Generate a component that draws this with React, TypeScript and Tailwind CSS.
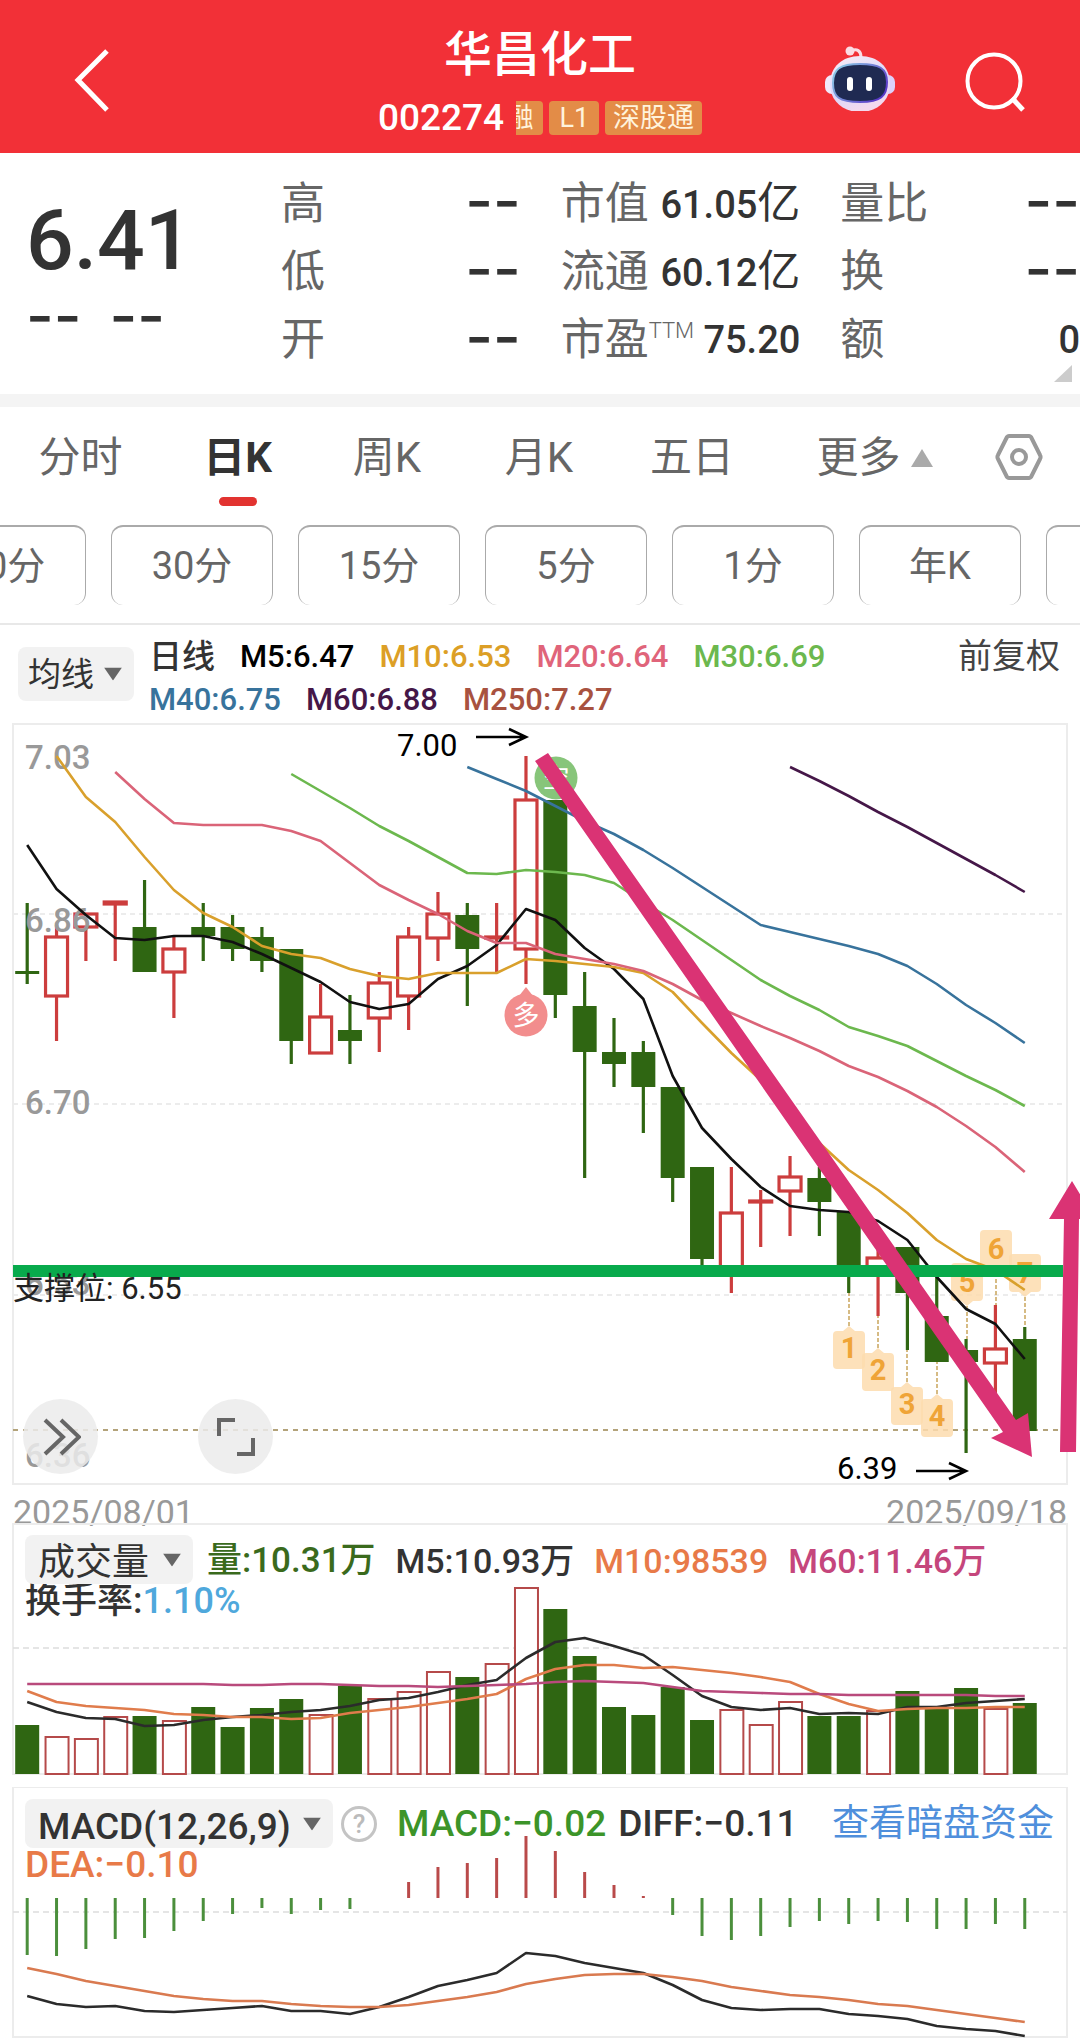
import { clsx } from "clsx";

const FONT = "font-[Roboto,'Noto_Sans_CJK_SC',sans-serif]";

const GREEN = "#2f6612";
const RED = "#cc3d3d";
const STEP = 29.34;
const BODY = 24;

const cx = (i: number) => 27.2 + i * STEP;

// direction, high, body top, body bottom, low
type Candle = ["up" | "down", number, number, number, number];

const candles: Candle[] = [
  ["down", 903, 971, 974, 984],
  ["up", 925, 937, 996, 1041],
  ["up", 914, 914, 927, 961],
  ["up", 903, 902, 904, 961],
  ["down", 880, 927, 972, 972],
  ["up", 937, 949, 972, 1018],
  ["down", 903, 927, 936, 961],
  ["down", 915, 927, 949, 961],
  ["down", 927, 937, 961, 972],
  ["down", 949, 949, 1041, 1064],
  ["up", 984, 1017, 1053, 1053],
  ["down", 995, 1030, 1041, 1064],
  ["up", 972, 983, 1018, 1052],
  ["up", 927, 937, 996, 1030],
  ["up", 892, 914, 938, 961],
  ["down", 903, 915, 949, 1006],
  ["up", 903, 937, 938, 972],
  ["up", 756, 800, 949, 984],
  ["down", 800, 800, 995, 1018],
  ["down", 972, 1006, 1052, 1178],
  ["down", 1018, 1052, 1064, 1087],
  ["down", 1041, 1052, 1087, 1133],
  ["down", 1087, 1087, 1178, 1202],
  ["down", 1167, 1167, 1259, 1270],
  ["up", 1167, 1213, 1270, 1293],
  ["up", 1190, 1201, 1202, 1247],
  ["up", 1156, 1177, 1191, 1236],
  ["down", 1167, 1178, 1202, 1236],
  ["down", 1212, 1212, 1270, 1293],
  ["up", 1250, 1258, 1270, 1316],
  ["down", 1247, 1247, 1293, 1350],
  ["down", 1270, 1316, 1362, 1362],
  ["down", 1339, 1350, 1362, 1453],
  ["up", 1305, 1349, 1363, 1396],
  ["down", 1327, 1339, 1431, 1431],
];

const averages = [
  {
    color: "#111111",
    start: 0,
    ys: [845, 889, 915, 938, 940, 936, 936, 942, 954, 968, 982, 1002, 1009, 1004, 979, 966, 945, 909, 920, 948, 969, 999, 1076, 1128, 1159, 1187, 1206, 1210, 1212, 1221, 1240, 1277, 1309, 1324, 1359],
  },
  {
    color: "#d9a02c",
    start: 1,
    ys: [756, 797, 822, 857, 890, 913, 927, 946, 954, 958, 969, 976, 979, 973, 973, 973, 959, 961, 964, 967, 973, 992, 1023, 1053, 1080, 1110, 1143, 1170, 1190, 1213, 1240, 1259, 1270, 1290],
  },
  {
    color: "#da6478",
    start: 3,
    ys: [772, 799, 823, 825, 825, 825, 831, 841, 863, 885, 900, 914, 931, 943, 943, 954, 959, 964, 971, 984, 1000, 1013, 1026, 1038, 1051, 1066, 1077, 1091, 1107, 1126, 1147, 1172],
  },
  {
    color: "#6cb84e",
    start: 9,
    ys: [774, 791, 808, 826, 841, 857, 873, 874, 870, 872, 875, 883, 902, 920, 940, 960, 980, 996, 1010, 1027, 1036, 1046, 1061, 1076, 1090, 1106],
  },
  {
    color: "#38739c",
    start: 15,
    ys: [767, 779, 791, 806, 821, 834, 850, 868, 887, 906, 925, 932, 939, 946, 954, 966, 984, 1005, 1023, 1043],
  },
  { color: "#451748", start: 26, ys: [767, 781, 796, 812, 827, 843, 859, 875, 892] },
];

// x, tip y, end of the leader line, side of the candle
const signals = [
  { n: 1, x: 849, tip: 1326, to: 1293 },
  { n: 2, x: 878, tip: 1348, to: 1316 },
  { n: 3, x: 907, tip: 1382, to: 1350 },
  { n: 4, x: 937, tip: 1394, to: 1362 },
  { n: 5, x: 967, tip: 1306, to: 1339, above: true },
  { n: 6, x: 996, tip: 1273, to: 1305, above: true },
  { n: 7, x: 1025, tip: 1297, to: 1327, above: true },
];

const volumes = [205, 217, 219, 197, 196, 201, 187, 207, 188, 179, 195, 166, 179, 172, 152, 157, 144, 68, 89, 136, 187, 195, 167, 200, 190, 205, 182, 196, 196, 191, 171, 189, 168, 189, 183];
const volumeUp = [1, 2, 3, 5, 10, 12, 13, 14, 16, 17, 24, 25, 26, 29, 33];
const volumeLines = [
  { color: "#2b2b2b", ys: [182, 192, 198, 199, 206, 205, 200, 197, 195, 192, 190, 186, 180, 178, 172, 165, 160, 138, 122, 118, 126, 135, 155, 176, 187, 190, 188, 194, 193, 194, 187, 187, 183, 181, 179] },
  { color: "#e07c4c", ys: [171, 182, 186, 188, 190, 194, 195, 197, 197, 199, 198, 193, 190, 187, 183, 179, 174, 159, 149, 145, 145, 148, 147, 150, 153, 157, 162, 174, 184, 191, 189, 188, 188, 187, 187] },
  { color: "#b94a7c", ys: [164, 164, 164, 164, 164, 164, 164, 165, 165, 164, 164, 165, 166, 166, 167, 166, 165, 164, 162, 161, 162, 163, 167, 171, 172, 173, 174, 174, 175, 175, 175, 175, 175, 176, 176] },
];

const macd = [175, 176, 169, 159, 158, 151, 141, 134, 128, 134, 130, 129, 118, 102, 87, 83, 78, 56, 71, 92, 105, 116, 135, 156, 160, 156, 147, 141, 144, 141, 142, 149, 149, 144, 149];
const macdLines = [
  { color: "#2b2b2b", ys: [216, 224, 227, 226, 231, 232, 230, 228, 226, 231, 231, 234, 227, 217, 206, 200, 193, 173, 176, 183, 188, 193, 205, 220, 228, 230, 229, 229, 234, 236, 239, 246, 249, 251, 256] },
  { color: "#d97a50", ys: [188, 194, 201, 206, 211, 216, 219, 221, 221, 224, 226, 227, 227, 225, 221, 217, 212, 204, 199, 195, 194, 194, 197, 201, 207, 211, 215, 217, 220, 224, 226, 230, 234, 238, 242] },
];

const points = (ys: number[], start = 0) => ys.map((y, i) => `${cx(i + start)},${y}`).join(" ");

function Line({ ys, color, start = 0 }: { ys: number[]; color: string; start?: number }) {
  return <polyline points={points(ys, start)} fill="none" stroke={color} strokeWidth={2.6} strokeLinejoin="round" />;
}

function RobotIcon() {
  return (
    <svg width="74" height="68" viewBox="0 0 74 68">
      <defs>
        <linearGradient id="shell" x1="0" y1="0" x2="0.4" y2="1">
          <stop offset="0" stopColor="#fbeef4" />
          <stop offset="0.6" stopColor="#d9d6fb" />
          <stop offset="1" stopColor="#f3d9ee" />
        </linearGradient>
        <linearGradient id="rim" x1="0" y1="0" x2="1" y2="0.6">
          <stop offset="0" stopColor="#8fd8e8" />
          <stop offset="1" stopColor="#5a3bc8" />
        </linearGradient>
      </defs>
      <path d="M28 8c6-3 10 0 10 6" fill="none" stroke="#fbdce4" strokeWidth="3" />
      <circle cx="27" cy="8" r="4.5" fill="#fbdce4" />
      <rect x="2" y="32" width="14" height="19" rx="7" fill="#f1e9fb" />
      <rect x="58" y="32" width="14" height="19" rx="7" fill="#dcd0fa" />
      <path d="M37 13c18 0 30 11 30 28S54 69 37 69 7 58 7 41s12-28 30-28z" fill="url(#shell)" />
      <path d="M37 21c19 0 27 4 27 18s-6 20-27 20S10 54 10 40s7-19 27-19z" fill="#1f2a52" stroke="url(#rim)" strokeWidth="2" />
      <rect x="24" y="34" width="6" height="14" rx="3" fill="#fff" />
      <rect x="43" y="34" width="6" height="14" rx="3" fill="#fff" />
    </svg>
  );
}

function Header() {
  return (
    <header className="grid h-[153px] grid-cols-[1fr_auto_1fr] bg-[#f23037] text-white">
      <button aria-label="返回" className="mt-11 ml-[66px] h-[72px] w-12">
        <svg width="48" height="72" viewBox="0 0 48 72" fill="none" stroke="#fff" strokeWidth="5">
          <path d="M41 7 12 36l29 30" />
        </svg>
      </button>
      <div className="flex flex-col items-center pt-5">
        <h1 className="text-[48px] leading-[70px] font-medium">华昌化工</h1>
        <div className="mt-[10px] flex items-center gap-3">
          <span className="text-[37px] leading-[36px] font-medium">002274</span>
          <div className="flex w-[186px] justify-end gap-[6px] overflow-hidden text-[27px] leading-[34px] text-[#fff3dc]">
            <span className="rounded bg-[#e38c47] px-[10px]">融</span>
            <span className="rounded bg-[#e38c47] px-[10px]">L1</span>
            <span className="rounded bg-[#e38c47] px-2 whitespace-nowrap">深股通</span>
          </div>
        </div>
      </div>
      <div className="flex items-start justify-end gap-[67px] pr-[54px]">
        <button aria-label="智能助手" className="mt-[43px]">
          <RobotIcon />
        </button>
        <button aria-label="搜索" className="mt-[50px]">
          <svg width="62" height="62" viewBox="0 0 62 62" fill="none" stroke="#fff" strokeWidth="4">
            <circle cx="30" cy="31" r="26.5" />
            <path d="m48 48 11 12" strokeWidth="5" />
          </svg>
        </button>
      </div>
    </header>
  );
}

function Dashes() {
  return <span className="font-[Inter] text-[60px] font-medium">--</span>;
}

type Stat = { label: string; value: string; sup?: string; unit?: string };

const stats: Stat[][] = [
  [
    { label: "高", value: "--" },
    { label: "低", value: "--" },
    { label: "开", value: "--" },
  ],
  [
    { label: "市值", value: "61.05", unit: "亿" },
    { label: "流通", value: "60.12", unit: "亿" },
    { label: "市盈", sup: "TTM", value: "75.20" },
  ],
  [
    { label: "量比", value: "--" },
    { label: "换", value: "--" },
    { label: "额", value: "0" },
  ],
];

function Quote() {
  return (
    <section className="relative grid h-[254px] grid-cols-[241px_1fr_1fr_1fr] gap-x-10 border-b-[13px] border-[#f4f4f4] pt-[17px] text-[#333]">
      <div className="pt-[22px] pl-[26px]">
        <div className="text-[84px] leading-[98px] font-medium">6.41</div>
        <div className="flex h-[50px] items-center gap-7 leading-[50px]">
          <Dashes />
          <Dashes />
        </div>
      </div>
      {stats.map((column, i) => (
        <dl key={i}>
          {column.map(({ label, sup, value, unit }) => (
            <div className="flex h-[68px] items-center justify-between leading-[68px]" key={label}>
              <dt className="flex text-[44px] whitespace-nowrap text-[#666]">
                {label}
                {sup && <span className="text-[22px] leading-[50px] font-light">{sup}</span>}
              </dt>
              <dd className="text-[38px] font-medium whitespace-nowrap">
                {value === "--" ? <Dashes /> : value}
                {unit && <span className="text-[43px] font-normal">{unit}</span>}
              </dd>
            </div>
          ))}
        </dl>
      ))}
      <svg className="absolute right-2 bottom-3" width="18" height="17" viewBox="0 0 18 17">
        <path d="M18 0v17H0z" fill="#ccc" />
      </svg>
    </section>
  );
}

const tabs = ["分时", "日K", "周K", "月K", "五日", "更多"];
const periods = ["60分", "30分", "15分", "5分", "1分", "年K"];

function Periods() {
  return (
    <nav className="border-b-2 border-[#e8e8e8] text-[#666]">
      <div className="grid h-[118px] grid-cols-[161fr_153fr_146fr_158fr_148fr_217fr_72fr] pr-[25px] text-[42px]">
        {tabs.map((tab) => (
          <button
            className={clsx("flex flex-col items-center pt-[19px] leading-[64px]", tab === "日K" && "font-bold text-[#333]")}
            key={tab}
          >
            <span className="flex items-center gap-[10px]">
              {tab}
              {tab === "更多" && (
                <svg width="22" height="18" viewBox="0 0 22 18">
                  <path d="M11 0 22 18H0z" fill="#aaa" />
                </svg>
              )}
            </span>
            {tab === "日K" && <span className="mt-[7px] h-[9px] w-[38px] rounded-full bg-[#e23330]" />}
          </button>
        ))}
        <button aria-label="设置" className="flex justify-center pt-[26px]">
          <svg width="48" height="48" viewBox="0 0 48 48" fill="none" stroke="#999" strokeWidth="4">
            <path d="M14 3h20a3 3 0 0 1 2 1l9 18a4 4 0 0 1 0 4l-9 18a3 3 0 0 1-2 1H14a3 3 0 0 1-2-1L3 26a4 4 0 0 1 0-4l9-18a3 3 0 0 1 2-1z" />
            <circle cx="24" cy="24" r="7" />
          </svg>
        </button>
      </div>
      <div className="-ml-[76px] flex gap-[25px] overflow-hidden pb-[18px]">
        {periods.map((period) => (
          <button
            className="h-20 w-[162px] shrink-0 rounded-xl border-x border-t-2 border-[#aaa] text-[38px]"
            key={period}
          >
            {period}
          </button>
        ))}
        <button aria-label="季K" className="h-20 w-[162px] shrink-0 rounded-xl border-x border-t-2 border-[#aaa]" />
      </div>
    </nav>
  );
}

function Picker({ label, value, className }: { label: string; value: string; className: string }) {
  return (
    <div className={clsx("relative shrink-0 rounded-lg bg-[#f2f2f2] text-[#333]", className)}>
      <select aria-label={label} className="h-full w-full appearance-none bg-transparent" defaultValue={value}>
        <option>{value}</option>
      </select>
      <svg className="pointer-events-none absolute top-1/2 right-3 -translate-y-1/2" width="18" height="13" viewBox="0 0 18 13">
        <path d="M0 0h18l-9 13z" fill="#666" />
      </svg>
    </div>
  );
}

function AverageLegend() {
  return (
    <div className="flex h-[95px] gap-[15px] pt-[10px] pr-5 pl-[18px] text-[31px] leading-[43px] font-medium">
      <Picker className="mt-3 h-[54px] w-[116px] pl-[10px] text-[33px] font-normal" label="主图指标" value="均线" />
      <div className="grow">
        <div className="flex gap-[25px]">
          <span className="text-[33px] text-[#333]">日线</span>
          <span className="text-black">M5:6.47</span>
          <span className="text-[#dc9f26]">M10:6.53</span>
          <span className="text-[#e0647a]">M20:6.64</span>
          <span className="text-[#6cb84e]">M30:6.69</span>
        </div>
        <div className="flex gap-[25px]">
          <span className="text-[#38739c]">M40:6.75</span>
          <span className="text-[#451748]">M60:6.88</span>
          <span className="text-[#a85240]">M250:7.27</span>
        </div>
      </div>
      <button className="h-[43px] text-[34px] font-normal whitespace-nowrap text-[#444]">前复权</button>
    </div>
  );
}

function PriceChart() {
  return (
    <section className="relative">
      <svg className="block w-full" viewBox="0 720 1080 766" fontFamily="Roboto, 'Noto Sans CJK SC', sans-serif">
        <rect x="13" y="724" width="1054" height="760" fill="none" stroke="#ececec" strokeWidth="2" />
        {[914, 1104, 1295].map((y) => (
          <path d={`M13 ${y}H1067`} stroke="#ececec" strokeWidth="2" strokeDasharray="5 4" key={y} />
        ))}
        <path d="M13 1430H1067" stroke="#b3a37a" strokeWidth="2" strokeDasharray="5 5" />

        {candles.map(([dir, high, top, bottom, low], i) => {
          const color = dir === "up" ? RED : GREEN;
          return (
            <g key={i}>
              <path d={`M${cx(i)} ${high}V${top}M${cx(i)} ${bottom}V${low}`} stroke={color} strokeWidth="3.2" />
              <rect
                x={cx(i) - (dir === "up" ? 11 : 12)}
                y={top}
                width={dir === "up" ? BODY - 2 : BODY}
                height={bottom - top}
                fill={dir === "up" ? "#fff" : color}
                stroke={dir === "up" ? color : "none"}
                strokeWidth="3.2"
              />
            </g>
          );
        })}

        <g fill="#999" fontSize="33" fontWeight="500">
          <text x="25" y="769">7.03</text>
          <text x="25" y="932">6.86</text>
          <text x="25" y="1114">6.70</text>
          <text x="25" y="1295">6.53</text>
          <text x="25" y="1467">6.36</text>
        </g>

        {signals.map(({ n, x, tip, to, above }) => (
          <g key={n}>
            <path d={`M${x} ${tip}V${to}`} stroke="#c9a55c" strokeWidth="1.5" strokeDasharray="4 2" />
            <path
              d={
                above
                  ? `M${x} ${tip}l-6-5h-6q-4 0-4-4v-30q0-4 4-4h24q4 0 4 4v30q0 4-4 4h-6z`
                  : `M${x} ${tip}l6 5h6q4 0 4 4v30q0 4-4 4h-24q-4 0-4-4v-30q0-4 4-4h6z`
              }
              fill="#fddcae"
              fillOpacity="0.85"
            />
            <text x={x} y={above ? tip - 14 : tip + 32} fill="#efa437" fontSize="29" fontWeight="700" textAnchor="middle">
              {n}
            </text>
          </g>
        ))}

        {averages.map((line) => (
          <Line key={line.color} {...line} />
        ))}

        <path d="m526 987 7 9h-14z" fill="#f28d8d" />
        <circle cx="526" cy="1015" r="21.5" fill="#f28d8d" />
        <text x="526" y="1025" fill="#fff" fontSize="27" textAnchor="middle">多</text>
        <circle cx="556" cy="778" r="21.5" fill="#87c57a" />
        <text x="556" y="788" fill="#fff" fontSize="27" textAnchor="middle">空</text>

        <g fontSize="31" fill="#000">
          <text x="397" y="756">7.00</text>
          <text x="837" y="1479">6.39</text>
        </g>
        <g fill="none" stroke="#000" strokeWidth="2.6">
          <path d="M476 737h50M509 729l17 8-17 8" />
          <path d="M916 1471h50M949 1463l17 8-17 8" />
        </g>

        <path d="M13 1265h1050v12H13z" fill="#08aa4c" />
        <g fill="#da3374">
          <path d="m535 761 13-8 468 667 12-7 4 44-41-19 12-6z" />
          <path d="m1072 1181 23 38h-16l-3 233h-16l4-233h-15z" />
        </g>
        <text x="13" y="1299" fontSize="31" fill="#222">支撑位: 6.55</text>
      </svg>

      <div className="absolute bottom-3 left-[23px] flex gap-[100px]">
        <button aria-label="展开" className="size-[75px] rounded-full bg-[#ebebeb]/85">
          <svg className="m-auto" width="40" height="40" viewBox="0 0 40 40" fill="none" stroke="#666" strokeWidth="4">
            <path d="m4 3 18 17L4 37M20 3l18 17-18 17" />
          </svg>
        </button>
        <button aria-label="全屏" className="size-[75px] rounded-full bg-[#ebebeb]/85">
          <svg className="m-auto" width="40" height="40" viewBox="0 0 40 40" fill="none" stroke="#666" strokeWidth="4">
            <path d="M3 19V3h16M21 37h16V21" />
          </svg>
        </button>
      </div>
    </section>
  );
}

function VolumeChart() {
  return (
    <section className="relative">
      <svg className="block w-full" viewBox="0 3 1080 264">
        <rect x="13" y="4" width="1054" height="250" fill="none" stroke="#ececec" strokeWidth="2" />
        <path d="M13 128H1067" stroke="#ddd" strokeWidth="1.5" strokeDasharray="6 4" />
        {volumes.map((top, i) =>
          volumeUp.includes(i) ? (
            <rect x={cx(i) - 11} y={top} width={BODY - 1} height={254 - top} fill="#fff" stroke="#b54a4a" strokeWidth="2" key={i} />
          ) : (
            <rect x={cx(i) - 12} y={top} width={BODY} height={254 - top} fill={GREEN} key={i} />
          )
        )}
        {volumeLines.map((line) => (
          <Line key={line.color} {...line} />
        ))}
      </svg>
      <div className="absolute inset-x-0 top-0 pt-3 pl-[25px] text-[34px] font-medium whitespace-nowrap">
        <div className="flex h-[49px] items-center gap-5">
          <Picker className="-mr-[6px] h-[49px] w-[168px] pl-[13px] text-[37px] font-normal" label="副图指标" value="成交量" />
          <span className="pt-1 text-[35px] text-[#3a6a1c]">量:10.31万</span>
          <span className="pt-1 text-[#333]">M5:10.93万</span>
          <span className="pt-1 text-[#e87a48]">M10:98539</span>
          <span className="pt-1 text-[#c5467c]">M60:11.46万</span>
        </div>
        <div className="text-[36px] leading-[34px] text-[#333]">
          换手率:<span className="text-[#4fa8dc]">1.10%</span>
        </div>
      </div>
    </section>
  );
}

function MacdChart() {
  return (
    <section className="relative">
      <svg className="block w-full" viewBox="0 7 1080 254">
        <rect x="13" y="7" width="1054" height="250" fill="none" stroke="#ececec" strokeWidth="2" />
        <path d="M13 132H1067" stroke="#ddd" strokeWidth="1.5" strokeDasharray="6 4" />
        {macd.map((y, i) => (
          <path d={`M${cx(i)} 118V${y}`} stroke={y > 118 ? "#4b8f3c" : "#b94a4a"} strokeWidth="3" key={i} />
        ))}
        {macdLines.map((line) => (
          <Line key={line.color} {...line} />
        ))}
      </svg>
      <div className="absolute inset-x-0 top-0 pt-3 pr-[26px] pl-[25px] text-[37px] font-medium whitespace-nowrap">
        <div className="flex h-[49px] items-center gap-3">
          <Picker className="h-[49px] w-[308px] pl-[13px]" label="副图指标" value="MACD(12,26,9)" />
          <button aria-label="指标说明" className="mr-2 -ml-1 size-9 rounded-full border-[3px] border-[#c4c4c4] text-[26px] leading-[30px] text-[#bbb]">
            ?
          </button>
          <span className="text-[#3c9429]">MACD:−0.02</span>
          <span className="text-[#333]">DIFF:−0.11</span>
          <a className="ml-auto font-normal text-[#4f8fdc]" href="#funds">
            查看暗盘资金
          </a>
        </div>
        <div className="leading-[34px] text-[#e87a48]">DEA:−0.10</div>
      </div>
    </section>
  );
}

export default function App() {
  return (
    <main className={clsx("overflow-hidden bg-white", FONT)}>
      <Header />
      <Quote />
      <Periods />
      <AverageLegend />
      <PriceChart />
      <div className="flex h-[37px] items-center justify-between px-[13px] pt-[14px] text-[34px] leading-[28px] text-[#999]">
        <time>2025/08/01</time>
        <time>2025/09/18</time>
      </div>
      <VolumeChart />
      <MacdChart />
    </main>
  );
}
